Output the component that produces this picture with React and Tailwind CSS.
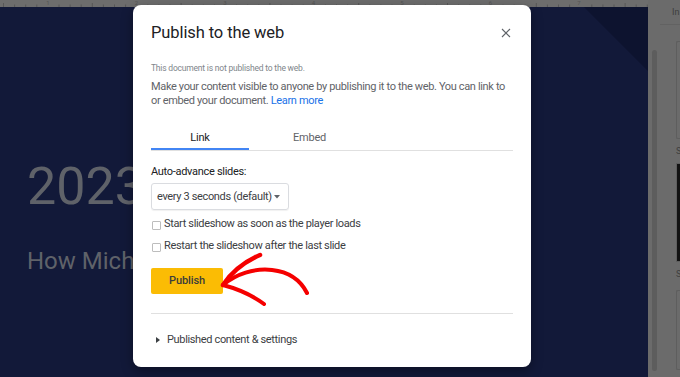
import React from "react";

function Ruler() {
  const ticks = [];
  for (let i = 0; i < 62; i++) {
    const x = 3.5 + i * 11.1;
    const major = i % 8 === 4;
    const half = i % 8 === 0;
    if (major) continue;
    ticks.push(
      <line key={i} x1={x} x2={x} y1={half ? 3 : 4.5} y2={7} stroke="#575757" strokeWidth="1" />
    );
  }
  const nums = [1, 2, 3, 4, 5, 6, 7];
  return (
    <svg width="648" height="7" className="block">
      {ticks}
      {nums.map((n, i) => (
        <text key={n} x={48 + i * 88.5} y={5} fontSize="6" fill="#555" textAnchor="middle" fontFamily="Roboto, sans-serif">
          {n}
        </text>
      ))}
    </svg>
  );
}

export default function App() {
  return (
    <div className="relative w-[680px] h-[377px] overflow-hidden bg-[#6b6b6b] font-['Roboto',sans-serif]">
      <div className="flex h-full">
        {/* slide column */}
        <div className="w-[648px] flex flex-col">
          <div className="h-[7px] bg-[#6d6d6d]">
            <Ruler />
          </div>
          <div className="relative flex-1 bg-[#121939] pl-[27px] overflow-hidden">
            <div className="absolute right-0 top-0 w-0 h-0 border-t-[64px] border-t-[#0d132f] border-l-[64px] border-l-transparent" />
            <div className="mt-[154px] text-[52px] leading-none text-[#5f6269] whitespace-nowrap">2023 Marketing</div>
            <div className="mt-[36px] text-[24px] leading-none text-[#5f6269] whitespace-nowrap">How Michelle Grew Sales</div>
          </div>
        </div>
        {/* right strip */}
        <div className="flex-1 flex bg-[#6b6b6b]">
          <div className="w-[4px]" />
          <div className="w-[5px] pt-[50px] pb-[6px]">
            <div className="h-full rounded-full bg-[#5d5d5d]" />
          </div>
          <div className="w-[3px]" />
          <div className="flex-1 flex flex-col">
            <div className="h-[25px] border-b border-[#626262] pl-[12px] pt-[6px] text-[9px] text-[#3e3e3e] leading-[12px]">In</div>
            <div className="pl-[16px] pt-[16px] flex flex-col">
              <div className="h-[98px] border border-[#5e5e5e] border-r-0 rounded-l-[2px]" />
              <div className="h-[24px] text-[9px] text-[#3e3e3e] leading-[24px]">S</div>
              <div className="h-[99px] bg-[#121212] border border-[#5e5e5e]" />
              <div className="h-[28px] text-[9px] text-[#3e3e3e] leading-[24px]">S</div>
              <div className="h-[80px] border border-[#5e5e5e] border-r-0 rounded-l-[2px]" />
            </div>
          </div>
        </div>
      </div>

      {/* dialog */}
      <div className="absolute left-[133px] top-[5px] w-[398px] h-[362px] bg-white rounded-[8px] shadow-[0_4px_12px_rgba(0,0,0,0.35)] px-[18px] pt-[16px] flex flex-col">
        <div className="h-[24px] flex items-center justify-between">
          <div className="text-[16.5px] text-[#202124] leading-[24px] tracking-[-0.1px]">Publish to the web</div>
          <svg width="10" height="10" viewBox="0 0 10 10" className="mr-[2px]">
            <path d="M1 1 L9 9 M9 1 L1 9" stroke="#5f6368" strokeWidth="1.1" />
          </svg>
        </div>
        <div className="mt-[17px] text-[8.5px] tracking-[-0.2px] leading-[12px] text-[#80868b]">This document is not published to the web.</div>
        <div className="mt-[6px] text-[11px] tracking-[-0.35px] leading-[14px] text-[#5f6368]">
          Make your content visible to anyone by publishing it to the web. You can link to or embed your document.{" "}
          <span className="text-[#1a73e8]">Learn more</span>
        </div>
        <div className="mt-[20px] flex border-b border-[#e0e0e0]">
          <div className="w-[98px] h-[22px] -mb-px border-b-2 border-[#4285f4] flex items-start justify-center pt-[2px] text-[11px] tracking-[-0.2px] leading-[16px] text-[#202124]">Link</div>
          <div className="w-[121px] h-[22px] flex items-start justify-center pt-[2px] text-[11px] tracking-[-0.2px] leading-[16px] text-[#5f6368]">Embed</div>
        </div>
        <div className="mt-[13px] text-[11px] tracking-[-0.3px] leading-[16px] text-[#202124]">Auto-advance slides:</div>
        <div className="mt-[3px] w-[138px] h-[27px] border border-[#dadce0] rounded-[3px] shadow-[0_1px_1px_rgba(0,0,0,0.06)] flex items-center pl-[5px] pr-[8px] justify-between">
          <span className="text-[11px] tracking-[-0.35px] text-[#3c4043] leading-[16px] whitespace-nowrap">every 3 seconds (default)</span>
          <svg width="6" height="4" viewBox="0 0 6 4"><path d="M0 0 L6 0 L3 3.5 Z" fill="#5f6368" /></svg>
        </div>
        <div className="mt-[6px] h-[16px] flex items-center">
          <div className="w-[9px] h-[9px] border border-[#bdbdbd] rounded-[1px] ml-px mt-[3px]" />
          <span className="ml-[3px] text-[11px] tracking-[-0.35px] leading-[16px] text-[#3c4043]">Start slideshow as soon as the player loads</span>
        </div>
        <div className="mt-[6px] h-[16px] flex items-center">
          <div className="w-[9px] h-[9px] border border-[#bdbdbd] rounded-[1px] ml-px mt-[3px]" />
          <span className="ml-[3px] text-[11px] tracking-[-0.35px] leading-[16px] text-[#3c4043]">Restart the slideshow after the last slide</span>
        </div>
        <div className="mt-[14px] w-[72px] h-[26px] bg-[#fbbc04] rounded-[2px] flex items-center justify-center text-[11px] font-medium tracking-[-0.1px] text-[#3c3c3c]">Publish</div>
        <div className="mt-[19px] h-px bg-[#e0e0e0]" />
        <div className="mt-[18px] h-[16px] flex items-center">
          <svg width="4" height="6" viewBox="0 0 4 6" className="ml-[5px]"><path d="M0 0 L4 3 L0 6 Z" fill="#3c4043" /></svg>
          <span className="ml-[7px] text-[11px] tracking-[-0.35px] leading-[16px] text-[#3c4043]">Published content &amp; settings</span>
        </div>
      </div>

      {/* red arrow annotation */}
      <svg className="absolute left-0 top-0 pointer-events-none" width="680" height="377" viewBox="0 0 680 377">
        <g fill="none" stroke="#f50000" strokeLinecap="round" strokeLinejoin="round">
          <path d="M223 285 C 236 274, 254 268, 272 270 C 290 272, 301 281, 307 293" strokeWidth="4" />
          <path d="M223 285 C 231 273, 244 262, 260 255" strokeWidth="4.5" />
          <path d="M223 285 C 238 289, 252 295, 264 304" strokeWidth="4" />
        </g>
      </svg>
    </div>
  );
}
